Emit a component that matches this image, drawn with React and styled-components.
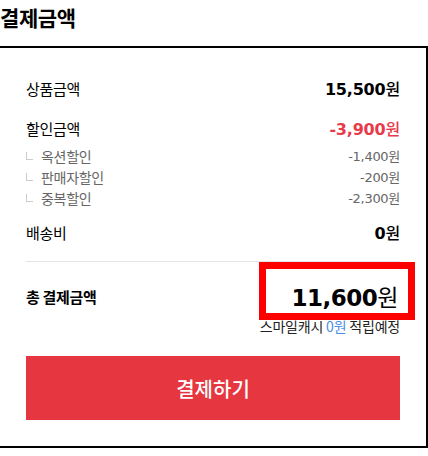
import React from "react"
import styled, { createGlobalStyle } from "styled-components"

const GlobalStyle = createGlobalStyle`
  html, body {
    margin: 0;
    padding: 0;
    background: #fff;
    overflow: hidden;
  }
  body {
    font-family: "DejaVu Sans", "Noto Sans CJK KR", sans-serif;
    color: #000;
  }
`

const Page = styled.div`
  width: 428px;
  height: 456px;
  overflow: hidden;
`

const Heading = styled.h2`
  margin: 0;
  padding-top: 3px;
  height: 43px;
  font-family: "Noto Sans CJK KR", sans-serif;
  font-size: 21px;
  font-weight: 700;
  line-height: 28px;
  letter-spacing: -0.4px;
`

const Box = styled.div`
  margin-left: -2px;
  width: 430px;
  box-sizing: border-box;
  border: 2px solid #000;
  padding: 28px 26px 26px 26px;
`

const Row = styled.div`
  display: flex;
  justify-content: space-between;
  align-items: center;
  height: 24px;
  margin-top: ${(p) => p.$gap || 0}px;
`

const Label = styled.span`
  font-family: "Noto Sans CJK KR", sans-serif;
  font-size: 15px;
  letter-spacing: -0.3px;
  color: #000;
`

const Amount = styled.span`
  font-size: 16px;
  font-weight: 700;
  letter-spacing: -0.2px;
  color: ${(p) => (p.$red ? "#e8394a" : "#000")};
`

const Won = styled.span`
  font-family: "Noto Sans CJK KR", sans-serif;
  font-weight: ${(p) => (p.$light ? 400 : 500)};
`

const SubList = styled.div`
  margin-top: 5px;
`

const SubRow = styled.div`
  display: flex;
  justify-content: space-between;
  align-items: center;
  height: 21px;
  font-size: 14px;
  color: #666;
`

const SubLabel = styled.span`
  display: flex;
  align-items: center;
  font-family: "Noto Sans CJK KR", sans-serif;
  letter-spacing: -0.3px;
  &::before {
    content: "";
    width: 6px;
    height: 7px;
    margin: 0 8px 0 0;
    border-left: 1px solid #ccc;
    border-bottom: 1px solid #ccc;
  }
`

const SubAmount = styled.span`
  font-family: "DejaVu Sans", "Noto Sans CJK KR", sans-serif;
  font-size: 13px;
  letter-spacing: -0.3px;
  color: #666;
`

const Divider = styled.hr`
  margin: 17px 0 0;
  border: 0;
  border-top: 1px solid #e4e4e4;
`

const TotalRow = styled.div`
  display: flex;
  justify-content: space-between;
  align-items: center;
  height: 36px;
  margin-top: 16px;
`

const TotalLabel = styled.span`
  font-family: "Noto Sans CJK KR", sans-serif;
  font-size: 15px;
  font-weight: 700;
  letter-spacing: -0.3px;
`

const TotalAmount = styled.span`
  position: relative;
  font-size: 23px;
  font-weight: 700;
  letter-spacing: -0.5px;
  margin-right: 2px;
`

const Highlight = styled.span`
  position: absolute;
  top: -17px;
  right: -17px;
  width: 156px;
  height: 58px;
  box-sizing: border-box;
  border: 7px solid #ff0000;
  pointer-events: none;
`

const Cash = styled.div`
  margin-top: 3px;
  height: 18px;
  line-height: 18px;
  text-align: right;
  font-family: "Noto Sans CJK KR", sans-serif;
  font-size: 14px;
  color: #222;
  letter-spacing: -0.2px;
`

const CashValue = styled.span`
  color: #4a90e2;
`

const PayButton = styled.button`
  display: block;
  width: 100%;
  height: 64px;
  margin-top: 21px;
  border: 0;
  background: #e63741;
  color: #fff;
  font-family: "Noto Sans CJK KR", sans-serif;
  font-size: 20px;
  font-weight: 500;
  cursor: pointer;
`

const discounts = [
  { label: "옥션할인", value: "-1,400" },
  { label: "판매자할인", value: "-200" },
  { label: "중복할인", value: "-2,300" },
]

export default function App() {
  return (
    <Page>
      <GlobalStyle />
      <Heading>결제금액</Heading>
      <Box>
        <Row>
          <Label>상품금액</Label>
          <Amount>
            15,500<Won>원</Won>
          </Amount>
        </Row>
        <Row $gap={16}>
          <Label>할인금액</Label>
          <Amount $red>
            -3,900<Won>원</Won>
          </Amount>
        </Row>
        <SubList>
          {discounts.map((d) => (
            <SubRow key={d.label}>
              <SubLabel>{d.label}</SubLabel>
              <SubAmount>
                {d.value}
                <Won $light>원</Won>
              </SubAmount>
            </SubRow>
          ))}
        </SubList>
        <Row $gap={12}>
          <Label>배송비</Label>
          <Amount>
            0<Won>원</Won>
          </Amount>
        </Row>
        <Divider />
        <TotalRow>
          <TotalLabel>총 결제금액</TotalLabel>
          <TotalAmount>
            11,600<Won $light>원</Won>
            <Highlight />
          </TotalAmount>
        </TotalRow>
        <Cash>
          스마일캐시 <CashValue>0원</CashValue> 적립예정
        </Cash>
        <PayButton>결제하기</PayButton>
      </Box>
    </Page>
  )
}
